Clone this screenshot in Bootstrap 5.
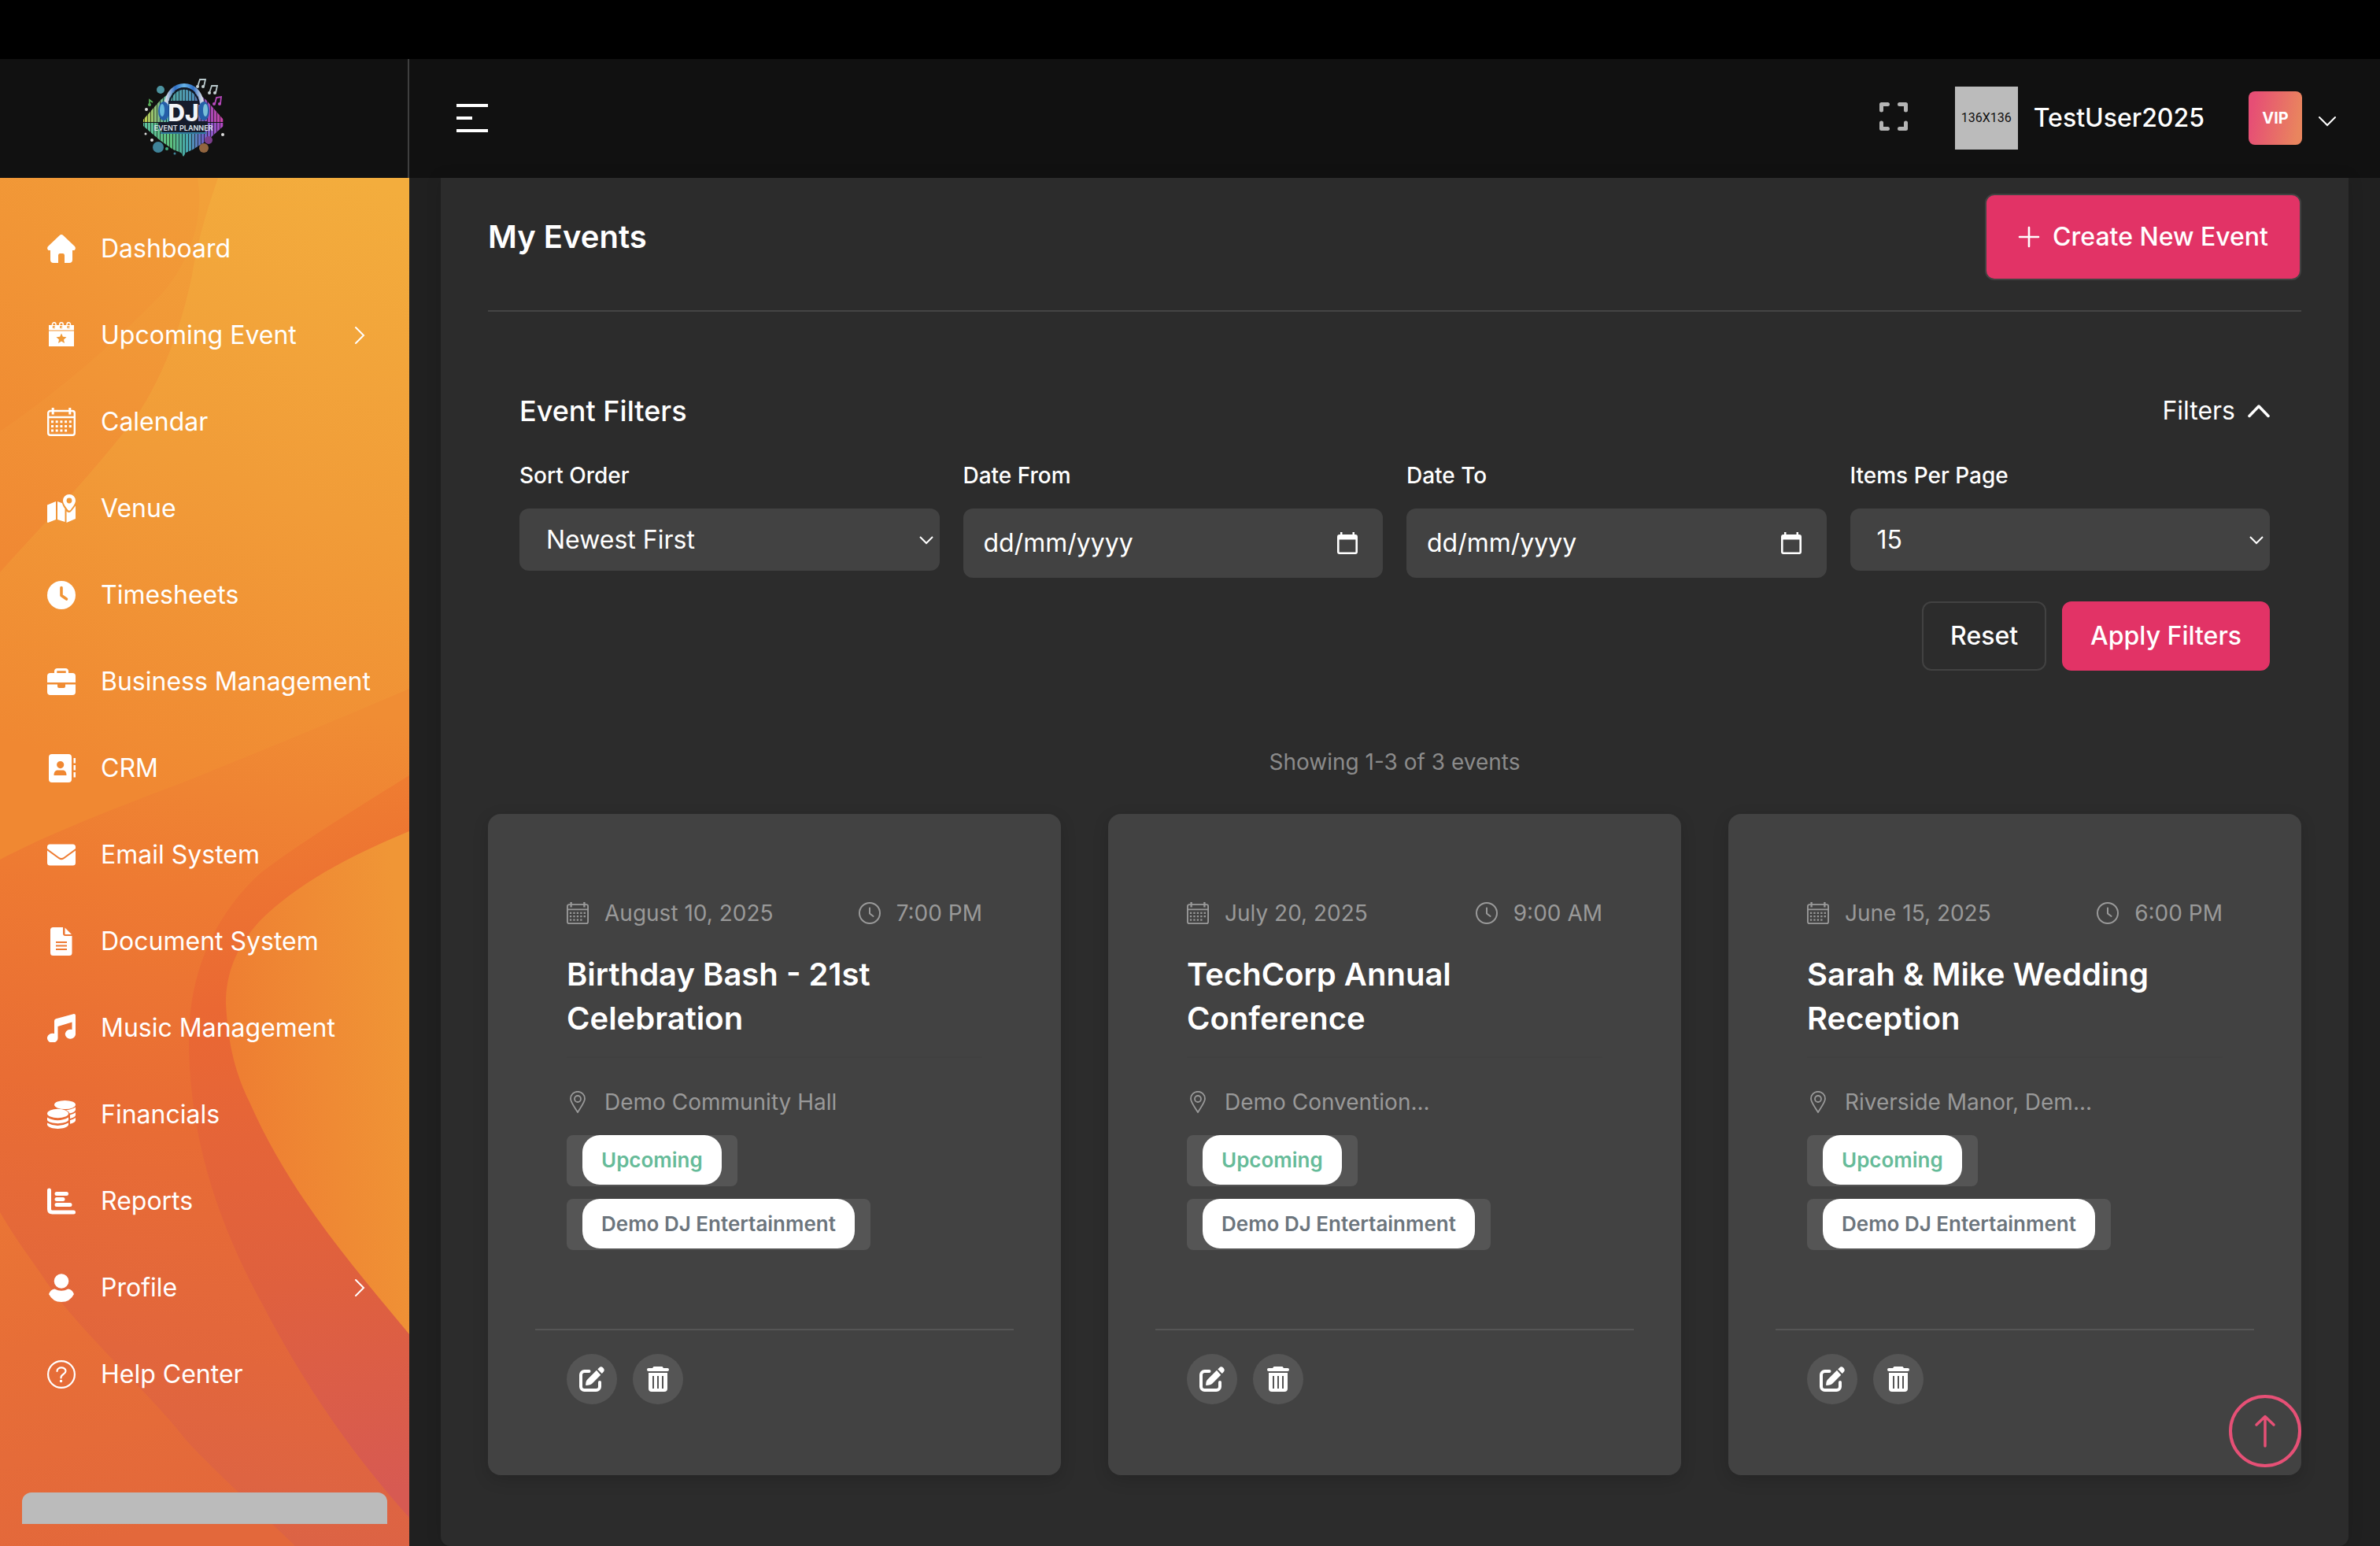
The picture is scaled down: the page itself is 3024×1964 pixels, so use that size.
<!DOCTYPE html>
<html lang="en-GB">
<head>
<meta charset="utf-8">
<meta name="viewport" content="width=device-width, initial-scale=1">
<title>My Events</title>
<link href="https://cdn.jsdelivr.net/npm/bootstrap@5.3.0/dist/css/bootstrap.min.css" rel="stylesheet">
<style>
  body { font-family: Inter, "Liberation Sans", sans-serif; font-size: 32px; line-height: 48px; color: #fff; background: #202020; }
  svg { display: block; flex: none; }
  .shell { height: 100vh; overflow: hidden; }
  .device-strip { height: 75px; background: #000; flex: none; }
  .topbar { height: 151px; background: #111; flex: none; }
  .brand { width: 520px; border-right: 2px solid #3f3f3f; padding: 0 52px 4px 0; }
  .tools { padding: 0 55px 2px 60px; }
  .plain-btn { background: none; border: 0; padding: 0; color: inherit; }
  .avatar { width: 80px; height: 80px; margin: 0 20px 0 60px; background: #bbb; color: #111; font: 16px Roboto, sans-serif; }
  .user-name { font-weight: 500; }
  .vip { width: 68px; height: 68px; margin: 0 20px 0 56px; border-radius: 8px; font-size: 20px; font-weight: 700; background: linear-gradient(100deg, #e64e75 10%, #e9855e 90%); }

  .side { width: 520px; padding-top: 35px; flex: none; background: #e8783a; }
  .side-art { position: absolute; inset: 0; width: 100%; height: 100%; }
  .side-link { height: 110px; padding: 0 56px 0 60px; gap: 32px; color: #fff; text-decoration: none; white-space: nowrap; }
  .side-link:hover { color: #fff; }
  .side-promo { height: 40px; margin: 95px 28px 0; background: #bbb; border-radius: 12px 12px 0 0; }

  .content-area { padding: 0 40px; }
  .panel { background: #2c2c2c; padding: 20px 60px 90px; border-radius: 0 0 12px 12px; box-shadow: 0 0 20px rgba(0,0,0,.12); }
  .panel-head { padding-bottom: 38px; border-bottom: 2px solid #444; }
  .page-title { font-size: 40px; line-height: 56px; font-weight: 600; }
  .btn { --bs-btn-font-size: 32px; --bs-btn-line-height: 48px; --bs-btn-font-weight: 500; --bs-btn-border-radius: 12px; --bs-btn-border-width: 2px; --bs-btn-color: #fff; --bs-btn-padding-y: 18px; --bs-btn-padding-x: 34px; }
  .btn-pink { --bs-btn-bg: #e23366; --bs-btn-border-color: #e23366; --bs-btn-hover-bg: #cf2a5a; --bs-btn-hover-color: #fff; }
  .btn-create { --bs-btn-padding-y: 29px; --bs-btn-padding-x: 40px; --bs-btn-border-color: #424242; gap: 16px; }
  .btn-line { --bs-btn-border-color: #424242; --bs-btn-hover-bg: #3a3a3a; --bs-btn-hover-color: #fff; }

  .filters { padding: 101px 40px 95px; }
  .filters-title { font-size: 36px; line-height: 50px; font-weight: 500; }
  .filter-grid { --bs-gutter-x: 30px; margin-top: 36px; }
  .form-label { font-size: 28px; line-height: 42px; font-weight: 500; margin-bottom: 21px; }
  .form-select { height: 79px; padding: 0 60px 0 34px; border: 0; border-radius: 12px; color: #fff; font-size: 32px; background-color: #424242; background-size: 18px 12px; background-position: right 8px center;
    --bs-form-select-bg-img: url("data:image/svg+xml,%3csvg xmlns='http://www.w3.org/2000/svg' viewBox='0 0 18 12'%3e%3cpath fill='none' stroke='%23fff' stroke-width='2' d='m1 2 8 8 8-8'/%3e%3c/svg%3e"); }
  .date-box { height: 88px; padding: 0 32px 0 26px; border-radius: 12px; background: #424242; }
  .date-box input { background: none; border: 0; color: #fff; outline: 0; min-width: 0; padding: 0; }
  .date-box input::placeholder { color: #fff; opacity: 1; }
  .filter-actions { margin-top: 30px; gap: 20px; }
  .result-note { font-size: 28px; line-height: 42px; margin-bottom: 45px; color: #8b8b8b; }

  .event-grid { --bs-gutter-x: 60px; }
  .event-card { --bs-card-bg: #424242; --bs-card-border-width: 0; --bs-card-border-radius: 16px; --bs-card-color: #fff; height: 840px; padding: 105px 60px 90px; box-shadow: 0 6px 20px rgba(0,0,0,.15); }
  .event-body { padding: 0 40px; }
  .meta { font-size: 28px; line-height: 42px; color: #999; gap: 20px; }
  .event-title { font-size: 40px; line-height: 56px; font-weight: 600; margin: 29px 0 0; padding-bottom: 20px; border-bottom: 2px solid #404040; }
  .place { margin-top: 35px; }
  .tags { margin-top: 21px; }
  .tag-wrap { padding: 0 20px 2px; background: #555; border-radius: 8px; }
  .tag { display: block; padding: 0 24px; border-radius: 22px; background: #fff; font-size: 26px; line-height: 63px; font-weight: 600; color: #6c757d; }
  .tag-green { color: #66bb99; }
  .event-foot { border-top: 2px solid #555; padding: 30px 40px 0; gap: 20px; }
  .round-btn { width: 64px; height: 64px; border-radius: 50%; border: 0; padding: 0; background: #555; color: #fff; }
  .to-top { position: fixed; right: 100px; bottom: 100px; width: 92px; height: 92px; border-radius: 50%; border: 4px solid #e65076; background: none; color: #e65076; padding: 0; }
</style>
<script src="https://cdn.jsdelivr.net/npm/bootstrap@5.3.0/dist/js/bootstrap.bundle.min.js" defer></script>
</head>
<body>
<svg width="0" height="0" class="position-absolute" aria-hidden="true">
  <symbol id="i-cal" viewBox="0 0 36 36">
    <path fill="none" stroke="currentColor" stroke-width="2.4" d="M4 4h28a2.8 2.8 0 0 1 2.800 2.800v25.200a2.800 2.800 0 0 1-2.800 2.800h-28a2.800 2.800 0 0 1-2.800-2.800v-25.200a2.800 2.800 0 0 1 2.800-2.800zM1.200 12h33.600"/>
    <path stroke="currentColor" stroke-width="3" d="M7.200 0v8.500M28.800 0v8.500"/>
    <path stroke="currentColor" stroke-width="3" stroke-dasharray="3 2.700" d="M5 17.800h27M5 23.400h27M5 29h21"/>
  </symbol>
  <symbol id="i-clock" viewBox="0 0 28 28">
    <circle cx="14" cy="14" r="13" fill="none" stroke="currentColor" stroke-width="2"/>
    <path fill="none" stroke="currentColor" stroke-width="2" stroke-linecap="round" stroke-linejoin="round" d="M14 7.500v7l4.600 3.500"/>
  </symbol>
  <symbol id="i-pin" viewBox="0 0 28 28">
    <path fill="none" stroke="currentColor" stroke-width="1.800" d="M14 27C9 19 5 14 5 9.800a9 9 0 0 1 18 0C23 14 19 19 14 27z"/>
    <circle cx="14" cy="10" r="4" fill="none" stroke="currentColor" stroke-width="1.800"/>
  </symbol>
  <symbol id="i-edit" viewBox="0 0 32 32">
    <path fill="none" stroke="currentColor" stroke-width="4" stroke-linecap="round" d="M12.500 6H6.500a4.500 4.500 0 0 0-4.500 4.500V25.500a4.500 4.500 0 0 0 4.500 4.500H21.500a4.500 4.500 0 0 0 4.500-4.500V20"/>
    <path fill="currentColor" d="M22 4.800 27.200 10.800 16.500 21.500Q14.500 23.800 8.200 24Q8 18.500 10.500 16.200zM23.300 3.400 25.500 1.200q2.200-2.200 4.700.3t.8 4.900L28.800 9z"/>
  </symbol>
  <symbol id="i-trash" viewBox="0 0 32 32">
    <path fill="currentColor" fill-rule="evenodd" d="M10.500 0h11l1.500 2h5a2 2 0 0 1 0 4H4a2 2 0 0 1 0-4h5zM4 8h24v20a4 4 0 0 1-4 4H8a4 4 0 0 1-4-4zM9 12v16h2V12zM15 12v16h2V12zM21 12v16h2V12z"/>
  </symbol>
  <symbol id="i-right" viewBox="0 0 14 24"><path fill="none" stroke="currentColor" stroke-width="2" stroke-linecap="round" d="m2 2 10 10L2 22"/></symbol>
  <symbol id="i-date" viewBox="0 0 26 28"><path fill="currentColor" fill-rule="evenodd" d="M4 0h2.500v3h13V0H22v3h1a3 3 0 0 1 3 3v19a3 3 0 0 1-3 3H3a3 3 0 0 1-3-3V6a3 3 0 0 1 3-3h1zM2.600 9.500v16h20.800v-16z"/></symbol>
</svg>

<div class="shell d-flex flex-column">
  <div class="device-strip"></div>

  <header class="topbar d-flex">
    <a href="#" class="brand d-flex align-items-center justify-content-center" aria-label="DJ Event Planner">
      <svg width="106" height="102" viewBox="180 98 106 102">
        <defs>
          <linearGradient id="gx" x1="0" x2="1"><stop offset="0" stop-color="#c3cf4a"/><stop offset=".3" stop-color="#56b0a4"/><stop offset=".62" stop-color="#4a8db5"/><stop offset=".8" stop-color="#9a48b5"/><stop offset="1" stop-color="#cc45a8"/></linearGradient>
          <linearGradient id="gy" x1="0" x2="1"><stop offset="0" stop-color="#5cc0a0"/><stop offset=".35" stop-color="#5ec07c"/><stop offset=".55" stop-color="#45a6b0"/><stop offset=".75" stop-color="#6a62c8"/><stop offset="1" stop-color="#b545c0"/></linearGradient>
          <linearGradient id="gh" x1="0" x2="1"><stop offset="0" stop-color="#d9dde6"/><stop offset=".25" stop-color="#2f6fc4"/><stop offset=".5" stop-color="#68b4e8"/><stop offset=".75" stop-color="#2f6fc4"/><stop offset="1" stop-color="#d9dde6"/></linearGradient>
          <pattern id="bars" width="4" height="4" patternUnits="userSpaceOnUse"><rect x="3" width="1" height="4" fill="#111" opacity=".7"/></pattern>
        </defs>
        <path d="M182 152 204 127 214 119 233 112 252 119 262 127 284 152V155H182z" fill="url(#gx)"/>
        <path d="M182 156H284V160L264 178 245 190 236 194 233 199 230 194 220 190 203 178 182 160z" fill="url(#gy)"/>
        <rect x="181" y="110" width="104" height="90" fill="url(#bars)"/>
        <path d="M211 134c2-34 44-34 46 0" fill="none" stroke="url(#gh)" stroke-width="5"/>
        <path d="M215 133c3-27 35-27 38 0" fill="none" stroke="#111827" stroke-width="2"/>
        <ellipse cx="208" cy="141" rx="7" ry="12" fill="#255fa8"/><ellipse cx="206" cy="140" rx="3" ry="8" fill="#66b9dc"/>
        <ellipse cx="259" cy="141" rx="7" ry="12" fill="#255fa8"/><ellipse cx="261" cy="140" rx="3" ry="8" fill="#79bfd8"/>
        <path d="M214 128h38v26h12v9l-5 6h-52l-6-6v-8h13z" fill="#161c2c"/>
        <path d="M204 169h58" stroke="#31799d" stroke-width="2"/>
        <text x="233" y="154" text-anchor="middle" font-family="Inter, sans-serif" font-weight="800" font-size="30" fill="#f4f5f8">DJ</text>
        <text x="233" y="166" text-anchor="middle" font-family="Inter, sans-serif" font-weight="600" font-size="9" fill="#dfe3ea">EVENT PLANNER</text>
        <circle cx="204" cy="114" r="5" fill="#4d93a0"/><circle cx="201" cy="187" r="7" fill="#3f8298"/><circle cx="259" cy="188" r="6" fill="#92653f"/><circle cx="265" cy="178" r="5" fill="#7b3e8c"/>
        <circle cx="186" cy="139" r="2" fill="#ddd"/><circle cx="185" cy="170" r="1.500" fill="#ddd"/><circle cx="193" cy="178" r="2" fill="#ddd"/><circle cx="283" cy="171" r="2" fill="#ddd"/><circle cx="222" cy="195" r="1.500" fill="#3f8298"/><circle cx="212" cy="189" r="2" fill="#43ad80"/>
        <g fill="none" stroke-width="1.800"><path stroke="#b9c9cc" d="M251 110l3-9 7 0-2 9M266 118l3-9 7 0-2 9"/><path stroke="#b848bd" d="M273 132l2-8 6-1-1 9"/><path stroke="#58ad58" d="M190 133v-6l4 3"/></g>
        <g fill="#c5d0d2"><circle cx="251" cy="110" r="2"/><circle cx="258" cy="110" r="2"/><circle cx="266" cy="118" r="2"/><circle cx="273" cy="118" r="2"/></g>
        <g fill="#b848bd"><circle cx="272" cy="132" r="2"/><circle cx="279" cy="132" r="2"/></g><circle cx="190" cy="133" r="2" fill="#58ad58"/>
      </svg>
    </a>
    <div class="tools d-flex flex-grow-1 align-items-center">
      <button class="plain-btn" aria-label="Toggle menu"><svg width="40" height="36" viewBox="0 0 40 36" fill="#fff"><path d="M0 0h40v4H0zM0 16h20v4H0zM0 32h40v4H0z"/></svg></button>
      <button class="plain-btn ms-auto pb-1" aria-label="Full screen"><svg width="36" height="36" viewBox="0 0 36 36" fill="none" stroke="#b4b4b4" stroke-width="5" stroke-linecap="round" stroke-linejoin="round"><path d="M2.500 10V2.500h8M25.500 2.500h8V10M33.500 26v7.500h-8M10.500 33.500h-8V26"/></svg></button>
      <div class="avatar d-flex align-items-center justify-content-center">136X136</div>
      <span class="user-name">TestUser2025</span>
      <span class="vip d-flex align-items-center justify-content-center">VIP</span>
      <button class="plain-btn pt-2" aria-label="Account menu"><svg width="24" height="14" viewBox="0 0 24 14" fill="none" stroke="#fff" stroke-width="2" stroke-linecap="round"><path d="m2 2 10 10L22 2"/></svg></button>
    </div>
  </header>

  <div class="d-flex flex-grow-1">
    <nav class="side position-relative">
      <svg class="side-art" viewBox="0 226 520 1738" preserveAspectRatio="none" aria-hidden="true">
        <defs>
          <linearGradient id="b0" gradientUnits="userSpaceOnUse" x1="460" y1="226" x2="160" y2="1000"><stop offset="0" stop-color="#f3ad3d"/><stop offset=".5" stop-color="#f19c38"/><stop offset="1" stop-color="#f08832"/></linearGradient>
          <linearGradient id="b1" gradientUnits="userSpaceOnUse" x1="200" y1="226" x2="0" y2="720"><stop offset="0" stop-color="#f2a139"/><stop offset="1" stop-color="#f08833"/></linearGradient>
          <linearGradient id="b2" gradientUnits="userSpaceOnUse" x1="200" y1="226" x2="0" y2="540"><stop offset="0" stop-color="#f29c38"/><stop offset="1" stop-color="#f08c33"/></linearGradient>
          <linearGradient id="b3" gradientUnits="userSpaceOnUse" x1="420" y1="900" x2="250" y2="1940"><stop offset="0" stop-color="#f08d34"/><stop offset=".25" stop-color="#ee7a32"/><stop offset=".5" stop-color="#e96d34"/><stop offset=".8" stop-color="#e2663c"/><stop offset="1" stop-color="#dc6345"/></linearGradient>
          <linearGradient id="b4" gradientUnits="userSpaceOnUse" x1="350" y1="1000" x2="450" y2="1900"><stop offset="0" stop-color="#ef7d31"/><stop offset=".3" stop-color="#ea6833"/><stop offset=".7" stop-color="#df603e"/><stop offset="1" stop-color="#d75a52"/></linearGradient>
          <linearGradient id="b5" gradientUnits="userSpaceOnUse" x1="290" y1="1300" x2="520" y2="1270"><stop offset="0" stop-color="#ee7e32"/><stop offset="1" stop-color="#f09636"/></linearGradient>
          <linearGradient id="b6" gradientUnits="userSpaceOnUse" x1="0" y1="1540" x2="120" y2="1964"><stop offset="0" stop-color="#ea7535"/><stop offset=".4" stop-color="#e76e37"/><stop offset="1" stop-color="#e3683b"/></linearGradient>
          <linearGradient id="b7" gradientUnits="userSpaceOnUse" x1="280" y1="1350" x2="420" y2="1900"><stop offset="0" stop-color="#ec7a34"/><stop offset=".4" stop-color="#e66d38"/><stop offset="1" stop-color="#df6545"/></linearGradient>
        </defs>
        <path fill="url(#b0)" d="M0 226h520v900H0z"/>
        <path fill="url(#b1)" d="M0 226h277C262 270 250 310 244 350C228 425 205 480 176 525C120 600 60 660 0 727z"/>
        <path fill="url(#b2)" d="M0 226h251C262 290 230 350 199 380C130 450 70 500 0 548z"/>
        <path fill="url(#b3)" d="M520 875C450 905 330 955 230 995C150 1025 60 1060 0 1092V1964H520z"/>
        <path fill="url(#b6)" d="M0 1540C20 1575 40 1600 60 1630C100 1690 190 1770 232 1824C260 1858 330 1920 375 1964H0z"/>
        <path fill="url(#b4)" d="M520 985C440 1035 375 1075 330 1110C270 1165 240 1240 240 1320C240 1450 280 1560 335 1660C390 1765 450 1850 520 1928z"/>
        <path fill="url(#b5)" d="M520 1056C450 1085 380 1120 330 1170C298 1205 287 1240 287 1275C290 1330 300 1365 317 1400C370 1520 450 1610 520 1695z"/>
      </svg>
      <div class="position-relative">
        <a class="side-link d-flex align-items-center" href="#"><svg width="36" height="36" viewBox="0 0 36 36" fill="#fff"><path d="M15.500 1.200q2.500-2.200 5 0L35 15q2 3-.5 5H32v12q0 4-4 4h-6V26q-.5-2-2-2h-4q-1.500 0-2 2v10H8q-4 0-4-4V20H1.500q-2.500-2-.5-5z"/></svg>Dashboard</a>
        <a class="side-link d-flex align-items-center" href="#"><svg width="36" height="36" viewBox="0 0 36 36"><path fill="#fff" d="M2 5h32v6.500H2zM2 12.500h32V32H2z"/><g fill="none" stroke="#fff" stroke-width="1.500"><path d="M6.500 6V4a2 2 0 0 1 4.500 0v2M15.700 6V4a2 2 0 0 1 4.500 0v2M25 6V4a2 2 0 0 1 4.500 0v2"/></g><g stroke="#f09a38" fill="none" stroke-width="1.200"><path d="M10 6.500H7.500v2H10M19.200 6.500h-2.500v2h2.500M28.500 6.500H26v2h2.500"/></g><path fill="#f09a38" d="m18 15.500 1.900 4.300 4.600.5-3.500 3.100 1 4.600-4-2.400-4 2.400 1-4.600-3.500-3.100 4.600-.5z"/></svg>Upcoming Event<svg class="ms-auto" width="14" height="24"><use href="#i-right"/></svg></a>
        <a class="side-link d-flex align-items-center" href="#"><svg width="36" height="36"><use href="#i-cal"/></svg>Calendar</a>
        <a class="side-link d-flex align-items-center" href="#"><svg width="36" height="36" viewBox="0 0 36 36" fill="#fff"><path fill-rule="evenodd" d="M28 0a8 8 0 0 1 8 8c0 3.500-4 9-6.500 12q-1.500 1.500-3 0C24 17 20 11.500 20 8a8 8 0 0 1 8-8zm0 4.600a3.400 3.400 0 1 0 0 6.800 3.400 3.400 0 0 0 0-6.800z"/><path d="M0 13.500 11 9v23L1 36q-1 0-1-1zM13 9l6 2.300c.5 2.500 2 5 3.500 7V35L13 32zM24.500 21.500q3 3 6 0L36 14.500V31l-11.500 5z"/></svg>Venue</a>
        <a class="side-link d-flex align-items-center" href="#"><svg width="36" height="36" viewBox="0 0 36 36"><circle cx="18" cy="18" r="18" fill="#fff"/><path d="M18 8.500V18.500l6.500 4.500" fill="none" stroke="#f09436" stroke-width="3.600" stroke-linecap="round" stroke-linejoin="round"/></svg>Timesheets</a>
        <a class="side-link d-flex align-items-center" href="#"><svg width="36" height="36" viewBox="0 0 36 36" fill="#fff"><path fill-rule="evenodd" d="M9 7V5q0-4 4-4h10q4 0 4 4v2h5q4 0 4 4v8H0v-8q0-4 4-4zm3.300 0h11.400V4.300H12.300zM0 21.500h13V24q0 2 2 2h6q2 0 2-2v-2.500h13V31q0 4-4 4H4q-4 0-4-4z"/></svg>Business Management</a>
        <a class="side-link d-flex align-items-center" href="#"><svg width="36" height="36" viewBox="0 0 36 36" fill="#fff"><path fill-rule="evenodd" d="M6 0h21q4 0 4 4v28q0 4-4 4H6q-4 0-4-4V4q0-4 4-4zm10.700 9a4.600 4.600 0 1 0 0 9.200 4.600 4.600 0 0 0 0-9.200zM8.500 27h16c0-4-1.500-6.500-5-6.500h-6c-3.500 0-5 2.500-5 6.500zM33.500 5H36v6.500h-2.500zM33.500 14H36v6.500h-2.500zM33.500 23H36v6.500h-2.500z"/></svg>CRM</a>
        <a class="side-link d-flex align-items-center" href="#"><svg width="36" height="36" viewBox="0 0 36 36" fill="#fff"><path d="M3.500 4.500h29q3.500 0 3.500 3.500v2L21 21q-3 2-6 0L0 10V8q0-3.500 3.500-3.500z"/><path d="M0 12.500 14.500 23q3.500 2.500 7 0L36 12.500V28q0 3.500-3.500 3.500h-29Q0 31.500 0 28z"/></svg>Email System</a>
        <a class="side-link d-flex align-items-center" href="#"><svg width="36" height="36" viewBox="0 0 36 36"><path fill="#fff" d="M7.500 0H20v8q0 3 3 3h8.500v21.500q0 3.500-3.500 3.500H7.500Q4 36 4 32.500v-29Q4 0 7.500 0zM22.500.500 31 9h-8.500z"/><path stroke="#ee7a33" stroke-width="2" d="M11 19h14M11 23.500h14M11 28h14"/></svg>Document System</a>
        <a class="side-link d-flex align-items-center" href="#"><svg width="36" height="36" viewBox="0 0 36 36" fill="#fff"><path d="M34 0q2 0 2 2v23.500a6.600 6 0 1 1-4.500-5.500V10.500L13.500 16v14a6.800 6 0 1 1-4.500-5V9q0-2 2-2.700z"/></svg>Music Management</a>
        <a class="side-link d-flex align-items-center" href="#"><svg width="36" height="36" viewBox="0 0 36 36" fill="#fff"><ellipse cx="22.500" cy="5.500" rx="13.500" ry="5.500"/><ellipse cx="13.500" cy="16.500" rx="13.500" ry="5.800"/><path d="M0 21.500q13 7.500 27 0v3.500c-3 5.500-24 5.500-27 0zM0 28.500q13 7 27 0V31c-3 6.500-24 6.500-27 0zM24 12.200q8-1 12-3.800v3.500q-1 3-7.500 4.500-1-3-4.500-4.200zM29 18.200q4.500-1 7-3v3.500q-1 3-7 4.200zM29 25q4.500-1 7-3v3.500q-1 3-7 4.200z"/></svg>Financials</a>
        <a class="side-link d-flex align-items-center" href="#"><svg width="36" height="36" viewBox="0 0 36 36" fill="none" stroke="#fff" stroke-width="5" stroke-linecap="round"><path d="M2.500 4v24q0 4 4 4H33.500"/><path d="M12 8.500h12.500M12 15.500h8M12 22.500h17"/></svg>Reports</a>
        <a class="side-link d-flex align-items-center" href="#"><svg width="36" height="36" viewBox="0 0 36 36" fill="#fff"><circle cx="18" cy="9.500" r="9.300"/><path d="M9.500 19.500q8.500 4.500 17 0 5 0 7.500 6.500-5 10-16 10T2 26q2.500-6.500 7.500-6.500z"/></svg>Profile<svg class="ms-auto" width="14" height="24"><use href="#i-right"/></svg></a>
        <a class="side-link d-flex align-items-center" href="#"><svg width="36" height="36" viewBox="0 0 36 36" fill="none" stroke="#fff" stroke-width="2.200"><circle cx="18" cy="18" r="16.900"/><path stroke-linecap="round" d="M12.500 14c0-6 11-6 11-.3 0 4.300-6 3.800-6 8.300v.5"/><circle cx="17.500" cy="26.500" r="1" fill="#fff" stroke-width="1.500"/></svg>Help Center</a>
        <div class="side-promo"></div>
      </div>
    </nav>

    <main class="content-area flex-grow-1">
      <section class="panel h-100">
        <div class="panel-head d-flex justify-content-between align-items-center">
          <h1 class="page-title m-0">My Events</h1>
          <button class="btn btn-pink btn-create d-flex align-items-center"><svg width="28" height="28" viewBox="0 0 28 28" stroke="#fff" stroke-width="2.600" stroke-linecap="round"><path d="M14 2v24M2 14h24"/></svg>Create New Event</button>
        </div>

        <form class="filters" onsubmit="return false">
          <div class="d-flex justify-content-between align-items-center">
            <h2 class="filters-title m-0">Event Filters</h2>
            <button type="button" class="plain-btn d-flex align-items-center gap-3">Filters<svg width="28" height="18" viewBox="0 0 28 18" fill="none" stroke="#fff" stroke-width="3.500" stroke-linecap="round" stroke-linejoin="round"><path d="M2 15.500 14 3l12 12.500"/></svg></button>
          </div>
          <div class="row filter-grid">
            <div class="col-3">
              <label class="form-label d-block" for="sort">Sort Order</label>
              <select id="sort" class="form-select"><option>Newest First</option><option>Oldest First</option></select>
            </div>
            <div class="col-3">
              <label class="form-label d-block" for="from">Date From</label>
              <div class="date-box d-flex align-items-center"><input id="from" type="text" class="flex-grow-1" placeholder="dd/mm/yyyy"><svg width="26" height="28"><use href="#i-date"/></svg></div>
            </div>
            <div class="col-3">
              <label class="form-label d-block" for="to">Date To</label>
              <div class="date-box d-flex align-items-center"><input id="to" type="text" class="flex-grow-1" placeholder="dd/mm/yyyy"><svg width="26" height="28"><use href="#i-date"/></svg></div>
            </div>
            <div class="col-3">
              <label class="form-label d-block" for="per">Items Per Page</label>
              <select id="per" class="form-select"><option>15</option><option>30</option></select>
            </div>
          </div>
          <div class="filter-actions d-flex justify-content-end">
            <button type="reset" class="btn btn-line">Reset</button>
            <button type="submit" class="btn btn-pink">Apply Filters</button>
          </div>
        </form>

        <p class="result-note text-center">Showing 1-3 of 3 events</p>

        <div class="row event-grid">
          <div class="col-4">
            <article class="card event-card">
              <div class="event-body">
                <div class="d-flex justify-content-between">
                  <span class="meta d-flex align-items-center"><svg width="28" height="28"><use href="#i-cal"/></svg>August 10, 2025</span>
                  <span class="meta d-flex align-items-center"><svg width="28" height="28"><use href="#i-clock"/></svg>7:00 PM</span>
                </div>
                <h3 class="event-title">Birthday Bash - 21st<br>Celebration</h3>
                <div class="meta place d-flex align-items-center"><svg width="28" height="28"><use href="#i-pin"/></svg>Demo Community Hall</div>
                <div class="tags d-flex flex-column align-items-start gap-3">
                  <div class="tag-wrap"><span class="tag tag-green">Upcoming</span></div>
                  <div class="tag-wrap"><span class="tag">Demo DJ Entertainment</span></div>
                </div>
              </div>
              <div class="event-foot d-flex mt-auto">
                <button class="round-btn d-flex align-items-center justify-content-center" aria-label="Edit"><svg width="32" height="32"><use href="#i-edit"/></svg></button>
                <button class="round-btn d-flex align-items-center justify-content-center" aria-label="Delete"><svg width="32" height="32"><use href="#i-trash"/></svg></button>
              </div>
            </article>
          </div>
          <div class="col-4">
            <article class="card event-card">
              <div class="event-body">
                <div class="d-flex justify-content-between">
                  <span class="meta d-flex align-items-center"><svg width="28" height="28"><use href="#i-cal"/></svg>July 20, 2025</span>
                  <span class="meta d-flex align-items-center"><svg width="28" height="28"><use href="#i-clock"/></svg>9:00 AM</span>
                </div>
                <h3 class="event-title">TechCorp Annual<br>Conference</h3>
                <div class="meta place d-flex align-items-center"><svg width="28" height="28"><use href="#i-pin"/></svg>Demo Convention...</div>
                <div class="tags d-flex flex-column align-items-start gap-3">
                  <div class="tag-wrap"><span class="tag tag-green">Upcoming</span></div>
                  <div class="tag-wrap"><span class="tag">Demo DJ Entertainment</span></div>
                </div>
              </div>
              <div class="event-foot d-flex mt-auto">
                <button class="round-btn d-flex align-items-center justify-content-center" aria-label="Edit"><svg width="32" height="32"><use href="#i-edit"/></svg></button>
                <button class="round-btn d-flex align-items-center justify-content-center" aria-label="Delete"><svg width="32" height="32"><use href="#i-trash"/></svg></button>
              </div>
            </article>
          </div>
          <div class="col-4">
            <article class="card event-card">
              <div class="event-body">
                <div class="d-flex justify-content-between">
                  <span class="meta d-flex align-items-center"><svg width="28" height="28"><use href="#i-cal"/></svg>June 15, 2025</span>
                  <span class="meta d-flex align-items-center"><svg width="28" height="28"><use href="#i-clock"/></svg>6:00 PM</span>
                </div>
                <h3 class="event-title">Sarah &amp; Mike Wedding<br>Reception</h3>
                <div class="meta place d-flex align-items-center"><svg width="28" height="28"><use href="#i-pin"/></svg>Riverside Manor, Dem...</div>
                <div class="tags d-flex flex-column align-items-start gap-3">
                  <div class="tag-wrap"><span class="tag tag-green">Upcoming</span></div>
                  <div class="tag-wrap"><span class="tag">Demo DJ Entertainment</span></div>
                </div>
              </div>
              <div class="event-foot d-flex mt-auto">
                <button class="round-btn d-flex align-items-center justify-content-center" aria-label="Edit"><svg width="32" height="32"><use href="#i-edit"/></svg></button>
                <button class="round-btn d-flex align-items-center justify-content-center" aria-label="Delete"><svg width="32" height="32"><use href="#i-trash"/></svg></button>
              </div>
            </article>
          </div>
        </div>
      </section>
    </main>
  </div>
</div>

<button class="to-top d-flex align-items-center justify-content-center" aria-label="Back to top"><svg width="28" height="42" viewBox="0 0 28 42" fill="none" stroke="currentColor" stroke-width="3.500" stroke-linecap="round" stroke-linejoin="round"><path d="M14 40V3M3 13 14 2.500 25 13"/></svg></button>
</body>
</html>
